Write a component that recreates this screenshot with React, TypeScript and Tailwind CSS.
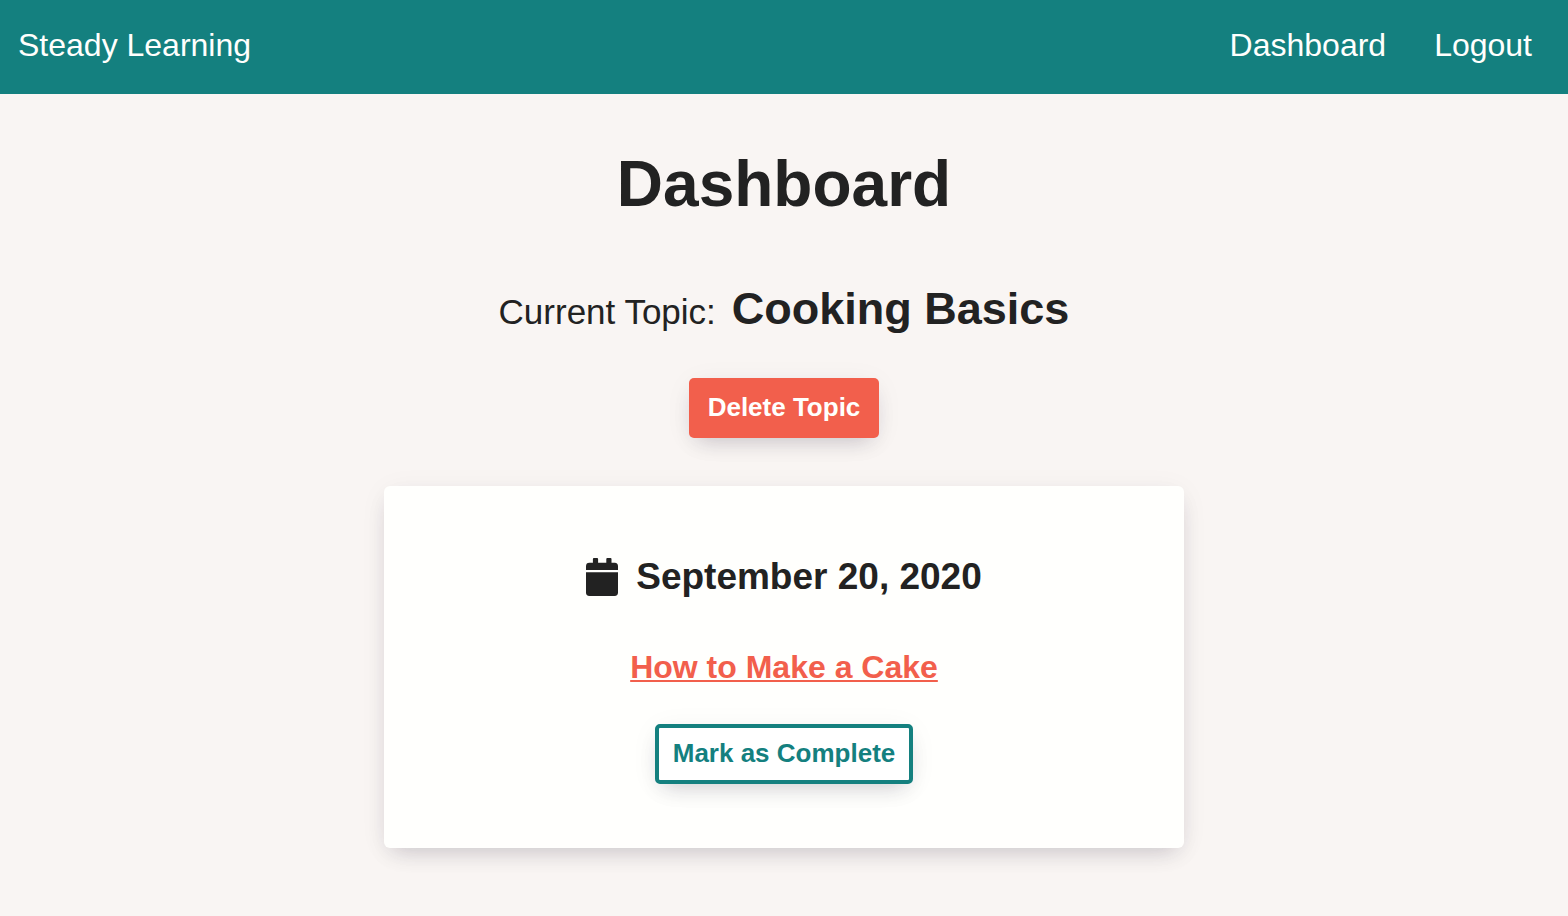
const softShadow =
  "shadow-[0_4px_30px_-2px_rgba(50,30,60,0.06),0_10px_22px_-8px_rgba(30,30,50,0.2)]";

function CalendarIcon() {
  return (
    <svg viewBox="0 0 32 38" className="h-[38px] w-8" fill="currentColor" aria-hidden="true">
      <path d="M0 12V8.2A3.4 3.4 0 0 1 3.4 4.8H6.9V1A1 1 0 0 1 7.9 0h3.2a1 1 0 0 1 1 1v3.8h8.2V1a1 1 0 0 1 1-1h3.2a1 1 0 0 1 1 1v3.8h3.3A3.4 3.4 0 0 1 32 8.2V12Z" />
      <path d="M0 14.2h32v20.4A3.4 3.4 0 0 1 28.6 38H3.4A3.4 3.4 0 0 1 0 34.6Z" />
    </svg>
  );
}

function Header() {
  return (
    <header className="flex items-center justify-between bg-[#14807f] px-[18px] pt-5 pb-6 text-[32px] leading-[50px] text-[#fffffd]">
      <a href="#home">Steady Learning</a>
      <nav className="flex gap-12 pr-[18px]">
        <a href="#dashboard">Dashboard</a>
        <a href="#logout">Logout</a>
      </nav>
    </header>
  );
}

export default function App() {
  return (
    <div className="min-h-screen bg-[#f9f5f3] font-['Liberation_Sans',Arial,sans-serif] text-[#222222]">
      <Header />
      <main className="flex flex-col items-center px-4 pt-12 pb-16">
        <h1 className="text-[64px] leading-[84px] font-bold">Dashboard</h1>
        <div className="mt-[53px] flex items-baseline gap-4 leading-[60px]">
          <span className="text-[35px]">Current Topic:</span>
          <h2 className="text-[45px] font-bold">Cooking Basics</h2>
        </div>
        <button
          type="button"
          className={`mt-9 h-[60px] rounded-[5px] bg-[#f25f4c] px-[19px] pb-0.5 text-[26px] font-bold text-[#fffffd] ${softShadow}`}
        >
          Delete Topic
        </button>
        <section className={`mt-12 flex w-full max-w-[800px] flex-col items-center rounded-[6px] bg-[#fffffd] py-16 ${softShadow}`}>
          <div className="flex items-center gap-[18px]">
            <CalendarIcon />
            <h3 className="text-[37px] leading-[54px] font-bold">September 20, 2020</h3>
          </div>
          <a
            href="#lesson"
            className="mt-[38px] text-[32px] leading-[50px] font-bold text-[#f25f4c] underline decoration-2 underline-offset-2 [text-decoration-skip-ink:none]"
          >
            How to Make a Cake
          </a>
          <button
            type="button"
            className={`mt-8 h-[60px] rounded-[5px] border-4 border-[#14807f] bg-white px-3.5 pb-0.5 text-[26px] font-bold text-[#14807f] ${softShadow}`}
          >
            Mark as Complete
          </button>
        </section>
      </main>
    </div>
  );
}
